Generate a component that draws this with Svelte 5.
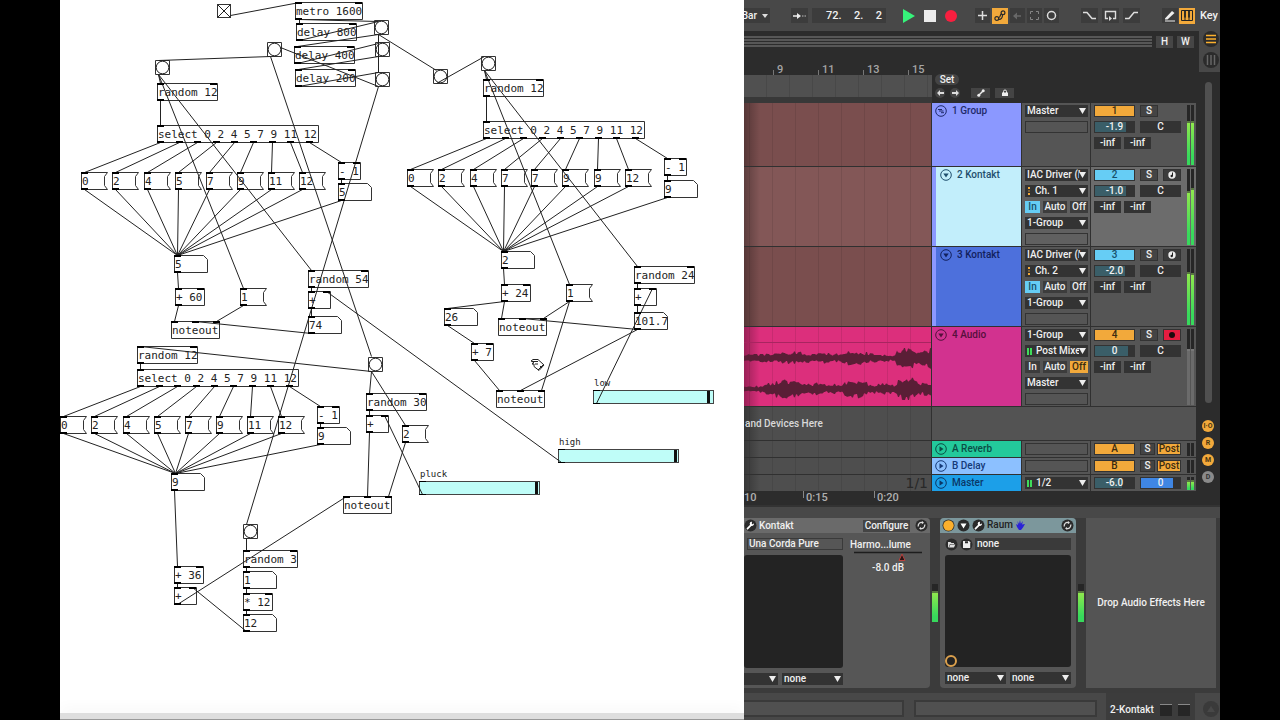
<script>
  const mono = (kind, x, y, w, t, ins, outs, h = 17) => ({ kind, x, y, w, t, ins, outs, h });
  const L = [3];
  const spread = (w) => [3, w - 4];
  const obj = (x, y, w, t, ins = spread(w), outs = L) => mono('obj', x, y, w, t, ins, outs);
  const msg = (x, y, t) => mono('msg', x, y, 26, t, L, L);
  const num = (x, y, t) => mono('num', x, y, 33, t, L, L);
  const bang = (x, y) => mono('bang', x, y, 14, '', L, L, 14);
  const nine = [3, 22, 40, 59, 77, 96, 115, 133, 152];
  const sel = (x, y) => obj(x, y, 161, 'select 0 2 4 5 7 9 11 12', L, nine);
  const nout = (x, y) => obj(x, y, 48, 'noteout', [3, 24, 45], []);

  const fans = [
    { xs: [21, 52, 84, 115, 146, 177, 208, 239], y: 173, t: ['0', '2', '4', '5', '7', '9', '11', '12'], sx: 97, sy: 126, to: [117, 256], m: [278, 163], n: [278, 184, '5'] },
    { xs: [347, 378, 410, 441, 471, 502, 534, 565], y: 170, t: ['0', '2', '4', '7', '7', '9', '9', '12'], sx: 423, sy: 122, to: [443, 252], m: [604, 159], n: [604, 181, '9'] },
    { xs: [0, 31, 63, 94, 125, 156, 187, 218], y: 417, t: ['0', '2', '4', '5', '7', '9', '11', '12'], sx: 77, sy: 370, to: [115, 474], m: [257, 407], n: [257, 428, '9'] }
  ];

  const nodes = [
    obj(235, 3, 67, 'metro 1600'), obj(236, 24, 60, 'delay 800'), obj(234, 47, 60, 'delay 400'), obj(235, 70, 60, 'delay 200'),
    bang(314, 21), bang(315, 43), bang(315, 73), bang(207, 43), bang(95, 61), bang(373, 70), bang(421, 57), bang(308, 358), bang(183, 525),
    obj(97, 84, 60, 'random 12'), obj(423, 80, 60, 'random 12'), obj(77, 347, 60, 'random 12'),
    num(114, 256, '5'), obj(115, 289, 29, '+ 60'), msg(180, 289, '1'), nout(111, 322),
    obj(248, 271, 60, 'random 54'), obj(248, 292, 22, '+'), num(248, 317, '74'),
    obj(306, 394, 60, 'random 30'), obj(306, 416, 22, '+'), msg(342, 426, '2'), nout(283, 497),
    num(441, 252, '2'), obj(441, 285, 29, '+ 24'), msg(506, 285, '1'), num(384, 309, '26'), nout(438, 319),
    obj(411, 344, 22, '+ 7'), nout(436, 391), obj(574, 267, 60, 'random 24'), obj(574, 289, 22, '+'), num(574, 313, '101.7'),
    num(111, 474, '9'), obj(183, 551, 54, 'random 3'), num(183, 572, '1'), obj(183, 594, 29, '* 12'), num(183, 615, '12'),
    obj(114, 567, 29, '+ 36'), obj(114, 588, 22, '+'),
    ...fans.flatMap((f) => [
      sel(f.sx, f.sy), obj(f.m[0], f.m[1], 22, '- 1'), num(f.n[0], f.n[1], f.n[2]),
      ...f.xs.map((x, i) => msg(x, f.y, f.t[i]))
    ])
  ];

  const wires = [
    [170, 16, 239, 3], [239, 20, 239, 24], [239, 20, 318, 22], [239, 41, 318, 22], [318, 35, 237, 47], [237, 64, 318, 44],
    [318, 57, 238, 70], [238, 87, 318, 73], [318, 35, 318, 73], [318, 35, 376, 71], [318, 87, 220, 48], [318, 87, 186, 525],
    [210, 57, 311, 357], [210, 57, 98, 61], [98, 75, 100, 84], [98, 75, 183, 289], [98, 75, 251, 271], [100, 101, 100, 126],
    [117, 273, 118, 289], [118, 306, 114, 322], [183, 306, 156, 322], [251, 334, 135, 322], [251, 288, 251, 292], [251, 309, 251, 317],
    [501, 463, 266, 292], [311, 372, 80, 347], [311, 372, 309, 394], [311, 372, 345, 426], [309, 411, 309, 416], [309, 433, 307, 497],
    [362, 495, 324, 416], [345, 443, 328, 497], [80, 364, 80, 370], [117, 605, 286, 497], [186, 632, 132, 588], [114, 491, 117, 567],
    [117, 584, 117, 588], [186, 539, 186, 551], [186, 568, 186, 572], [186, 589, 186, 594], [186, 611, 186, 615],
    [376, 84, 424, 57], [424, 71, 426, 80], [424, 71, 509, 285], [424, 71, 577, 267], [426, 97, 426, 122],
    [577, 284, 577, 289], [577, 306, 577, 313], [536, 404, 592, 289], [577, 330, 462, 319], [577, 330, 460, 391],
    [509, 302, 483, 319], [509, 302, 481, 391], [444, 302, 441, 319], [444, 302, 387, 309], [387, 326, 414, 344], [414, 361, 439, 391],
    [443, 269, 444, 285],
    ...fans.flatMap((f) => [
      ...f.xs.map((x, i) => [f.sx + nine[i], f.sy + 17, x + 3, f.y]),
      ...f.xs.map((x) => [x + 3, f.y + 17, f.to[0], f.to[1]]),
      [f.sx + 152, f.sy + 17, f.m[0] + 3, f.m[1]],
      [f.m[0] + 3, f.m[1] + 17, f.n[0] + 3, f.n[1]],
      [f.n[0] + 3, f.n[1] + 17, f.to[0], f.to[1]]
    ])
  ];

  const sliders = [
    { id: 'low', x: 533, y: 377, v: 97 },
    { id: 'high', x: 498, y: 436, v: 99 },
    { id: 'pluck', x: 359, y: 468, v: 99 }
  ];

  function frame(n) {
    const { x, y, w, h } = n;
    if (n.kind === 'msg') return `M${x + w} ${y}H${x}V${y + h}H${x + w}L${x + w - 3} ${y + h - 4}V${y + 4}Z`;
    if (n.kind === 'num') return `M${x} ${y}H${x + w - 4}L${x + w} ${y + 4}V${y + h}H${x}Z`;
    return `M${x} ${y}H${x + w}V${y + h}H${x}Z`;
  }

  function wave(mid, env) {
    let top = '', bottom = '';
    for (let x = 0; x <= 187; x++) {
      let k = 0;
      while (k < env.length - 2 && env[k + 1][0] <= x) k++;
      const [x0, a0] = env[k], [x1, a1] = env[k + 1];
      const a = a0 + ((a1 - a0) * (x - x0)) / (x1 - x0);
      const r = Math.abs(Math.sin((x >> 1) * 12.9898 + mid) * 43758.5) % 1;
      const q = Math.abs(Math.sin((x >> 1) * 7.233 + mid) * 24634.6) % 1;
      top += `L${x} ${(mid - a * (0.5 + 0.6 * r)).toFixed(1)}`;
      bottom = `L${x} ${(mid + a * (0.5 + 0.6 * q)).toFixed(1)}` + bottom;
    }
    return 'M' + top.slice(1) + bottom + 'Z';
  }
  const waveA = wave(31, [[0, 4], [30, 4], [45, 6], [58, 6], [66, 4], [80, 5], [92, 4], [104, 7], [118, 6], [135, 4], [151, 3], [153, 9], [168, 10], [176, 6], [187, 10]]);
  const waveB = wave(62, [[0, 3], [14, 3], [22, 6], [34, 8], [50, 10], [58, 5], [74, 6], [84, 4], [92, 5], [98, 3], [103, 9], [118, 9], [128, 4], [142, 6], [150, 4], [154, 10], [168, 11], [178, 6], [187, 7]]);

  const tracks = [
    { n: '1', name: '1 Group', c: 'group', icon: 'fold', act: 'amber', vol: '-1.9', volw: 80, ios: [['Master'], null], m: [74, 74] },
    { n: '2', name: '2 Kontakt', c: 'sky', icon: 'down', act: 'cyan', vol: '-1.0', volw: 80, arm: 'note', m: [71, 75], sel: true, child: true,
      ios: [['IAC Driver (I'], ['Ch. 1', 'midi'], 'In', ['1-Group'], null] },
    { n: '3', name: '3 Kontakt', c: 'blue', icon: 'down', act: 'cyan', vol: '-2.0', volw: 78, arm: 'note', m: [70, 68], child: true,
      ios: [['IAC Driver (I'], ['Ch. 2', 'midi'], 'In', ['1-Group'], null] },
    { n: '4', name: '4 Audio', c: 'pink', icon: 'down', act: 'amber', vol: '0', volw: 84, arm: 'rec', m: [74, 74], quiet: true,
      ios: [['1-Group'], ['Post Mixer', 'audio'], 'Off', ['Master'], null] }
  ];
  const returns = [{ n: 'A', name: 'A Reverb', c: 'mint' }, { n: 'B', name: 'B Delay', c: 'pale' }];
</script>

{#snippet pick(text, kind, label)}
  <span class="pick">
    {#if kind === 'midi'}<svg width="5" height="8" viewBox="0 0 5 8"><path d="M1 0h2v2h-2zM1 6h2v2h-2z" fill="#f2a93b" /><path d="M1 3h2v2h-2z" fill="#7a5f33" /></svg>{/if}
    {#if kind === 'audio'}<svg width="6" height="8" viewBox="0 0 6 8"><path d="M0 1h2v7H0zM3 1h2v7H3z" fill="#3fdc5a" /></svg>{/if}
    <select aria-label={label}><option>{text}</option></select>
    <svg class="tri" width="7" height="6" viewBox="0 0 7 6"><path d="M0 0h7L3.500 6z" fill="#eee" /></svg>
  </span>
{/snippet}

{#snippet disc(icon)}
  <svg class="disc" width="12" height="12" viewBox="0 0 12 12" fill="none" stroke="currentColor">
    <circle cx="6" cy="6" r="5.300" />
    {#if icon === 'fold'}<path d="M3 4.500h4M4 6h4.500M6 7.700h3" />
    {:else if icon === 'down'}<path d="M3.300 4.500h5.400L6 8.500z" fill="currentColor" stroke="none" />
    {:else}<path d="M4.500 3.300v5.400L8.500 6z" fill="currentColor" stroke="none" />{/if}
  </svg>
{/snippet}

{#snippet meter(a, b, quiet)}
  <span class="meter" class:quiet><i><b style:height="{a}%"></b></i><i><b style:height="{b}%"></b></i></span>
{/snippet}

{#snippet small(kind)}
  <svg width="13" height="13" viewBox="0 0 13 13" fill="none">
    <circle cx="6.500" cy="6.500" r="6" fill="#2b2b2b" />
    {#if kind === 'on'}<circle cx="6.500" cy="6.500" r="5.200" fill="#fbb02d" />
    {:else if kind === 'open'}<path d="M3.500 4.500h6L6.500 9.500z" fill="#fff" />
    {:else if kind === 'wrench'}<path d="M3.500 9.700L7.500 5.700" stroke="#fff" stroke-width="1.800" stroke-linecap="round" /><path d="M9.800 4.300a2.100 2.100 0 1 1-1.700-1.500L7.700 4.500l.9.900z" fill="#fff" />
    {:else if kind === 'swap'}<path d="M3.300 7.500a3.300 3.300 0 0 1 4-4M9.700 5.500a3.300 3.300 0 0 1-4 4" stroke="#ddd" stroke-width="1.300" /><path d="M7 2l2 1.800L6.800 5.200zM6 8l-2 1.300 2.200 1.700z" fill="#ddd" />
    {:else if kind === 'folder'}<path d="M3 4h2.500l1 1H9v1H5L3.500 9.500H3zM5.300 6.500h5L9 9.500H4z" fill="#ddd" />
    {:else if kind === 'disk'}<path d="M3 3h6l1.200 1.200V10H3z" fill="#eee" /><path d="M5 3.300h3v2H5z" fill="#2b2b2b" />{/if}
  </svg>
{/snippet}

<div class="screen">
  <section class="patch" aria-label="Patch">
    <input class="toggle" type="checkbox" checked aria-label="Start metro" />
    {#each nodes as n}
      {#if n.kind === 'msg'}
        <button class="node" style="left:{n.x}px;top:{n.y}px;width:{n.w}px">{n.t}</button>
      {:else if n.kind === 'num'}
        <input class="node" style="left:{n.x}px;top:{n.y}px;width:{n.w + 3}px" value={n.t} aria-label="Number" />
      {:else if n.kind === 'bang'}
        <button class="node bang" style="left:{n.x}px;top:{n.y}px" aria-label="Bang"></button>
      {:else}
        <div class="node" style="left:{n.x}px;top:{n.y}px;width:{n.w}px">{n.t}</div>
      {/if}
    {/each}
    {#each sliders as s}
      <div class="fader" style="left:{s.x}px;top:{s.y}px">
        <label for={s.id}>{s.id}</label>
        <input id={s.id} type="range" min="0" max="100" value={s.v} />
      </div>
    {/each}
    <svg class="wires" aria-hidden="true">
      <g fill="none" stroke="#222" transform="translate(.5 -.5)">
        {#each nodes as n}
          <path d={frame(n)} stroke="#333" />
          {#if n.kind === 'bang'}<circle cx={n.x + 7} cy={n.y + 7} r="6.300" />{/if}
        {/each}
        {#each wires as w}<path d="M{w[0]} {w[1]}L{w[2]} {w[3]}" />{/each}
      </g>
      {#each nodes as n}
        {#if n.kind !== 'bang'}
          {#each n.ins as i}<rect x={n.x + i - 3} y={n.y - 1} width="7" height="2" />{/each}
          {#each n.outs as o}<rect x={n.x + o - 3} y={n.y + n.h - 2} width="7" height="2" />{/each}
        {/if}
      {/each}
      {#each sliders as s}
        <rect x={s.x} y={s.y + 13} width="7" height="1" /><rect x={s.x} y={s.y + 26} width="7" height="1" />
      {/each}
      <path d="M471 361l2-1.500h5l6 5.500-5 5.500-5-4v-2.500h-2l2-1.500z" fill="#fff" stroke="#222" />
      <path d="M472 361.500h6M475 364h3M478 370l5-5M480 366l2 2" fill="none" stroke="#222" />
    </svg>
    <div class="dock"></div>
  </section>

  <section class="daw" aria-label="Arrangement">
    <header class="bar">
      <button class="cut tb">Bar <svg width="8" height="4" viewBox="0 0 8 4"><path d="M1 0h6L4 4z" fill="#ddd" /></svg></button>
      <div class="grp pos">
        <button class="tb w17" aria-label="Follow"><svg width="15" height="8" viewBox="0 0 15 8"><path d="M1 4h5" stroke="#eee" stroke-width="1.500" /><path d="M5 1l4 3-4 3z" fill="#eee" /><path d="M10 4h1.500M12.500 4h1.500" stroke="#bbb" /></svg></button>
        <div class="tb clock"><span>72.</span><span>2.</span><span>2</span></div>
      </div>
      <div class="grp play">
        <button aria-label="Play"><svg width="14" height="14" viewBox="0 0 14 14"><path d="M1 0l12 7-12 7z" fill="#36f27a" /></svg></button>
        <button aria-label="Stop"><svg width="12" height="12"><rect width="12" height="12" fill="#ececec" /></svg></button>
        <button aria-label="Record"><svg width="12" height="12"><circle cx="6" cy="6" r="6" fill="#f81f3f" /></svg></button>
      </div>
      <div class="grp edit">
        <button class="tb" aria-label="Overdub"><svg width="11" height="11"><path d="M5.500 1v9M1 5.500h9" stroke="#ddd" stroke-width="1.500" /></svg></button>
        <button class="tb hot" aria-label="Automation arm"><svg width="12" height="12" viewBox="0 0 12 12" fill="none" stroke="#2a2a2a" stroke-width="1.200"><circle cx="2.800" cy="8.500" r="1.900" /><circle cx="9" cy="2.800" r="1.900" /><path d="M4.500 7.500C7 7.500 5.500 4.500 7.500 4.200M8.500 5C8.500 8 7 9.500 4.800 9.300" /></svg></button>
        <button class="tb" aria-label="Re-enable automation"><svg width="10" height="8" viewBox="0 0 10 8"><path d="M0 4l4-3.500v7zM4 3.300h4v1.400H4z" fill="#686868" /></svg></button>
        <button class="tb" aria-label="Capture"><svg width="11" height="11" fill="none" stroke="#858585"><path d="M1.500 4V1.500H4M7 1.500h2.500V4M9.500 7v2.500H7M4 9.500H1.500V7" /></svg></button>
        <button class="tb" aria-label="Session record"><svg width="11" height="11"><circle cx="5.500" cy="5.500" r="4" fill="none" stroke="#ddd" stroke-width="1.500" /></svg></button>
      </div>
      <div class="grp loop">
        <button class="tb" aria-label="Punch in"><svg width="13" height="9" fill="none" stroke="#ddd" stroke-width="1.500"><path d="M0 1.500h4l5 6h4" /></svg></button>
        <button class="tb" aria-label="Loop"><svg width="13" height="12" fill="none" stroke="#ddd" stroke-width="1.400"><path d="M4 8.500H1.500v-7h10v7H9" /><path d="M5 6l3 2.500L5 11z" fill="#ddd" stroke="none" /></svg></button>
        <button class="tb" aria-label="Punch out"><svg width="13" height="9" fill="none" stroke="#ddd" stroke-width="1.500"><path d="M0 7.500h4l5-6h4" /></svg></button>
      </div>
      <div class="grp keys">
        <button class="tb" aria-label="Draw"><svg width="12" height="12" viewBox="0 0 12 12"><path d="M1 8.500L8 1l2.500 2L3.500 9.500H1z" fill="#eee" /><path d="M1 11h10" stroke="#eee" /></svg></button>
        <button class="tb hot" aria-label="Computer keyboard"><svg width="12" height="11" fill="none" stroke="#222"><path d="M.5.5h11v10H.5zM4 7v3.500M8 7v3.500" /><path d="M4 1v6.500M8 1v6.500" stroke-width="1.800" /></svg></button>
        <button class="key">Key</button>
      </div>
    </header>

    <div class="main">
      <div class="body">
        <div class="overview"><div class="stripes"></div><button>H</button><button>W</button></div>
        <div class="rulers">
          <div>
            <div class="beats">{#each ['9', '11', '13', '15'] as b}<span>{b}</span>{/each}</div>
            <div class="scrub"></div>
          </div>
          <div class="locators">
            <button class="set">Set</button>
            <div class="mini">
              <button class="round" aria-label="Previous locator"><svg width="7" height="6"><path d="M0 3l3-3v2h4v2H3v2z" fill="#ddd" /></svg></button>
              <button class="round" aria-label="Next locator"><svg width="7" height="6"><path d="M7 3L4 0v2H0v2h4v2z" fill="#ddd" /></svg></button>
              <button class="flat" aria-label="Automation mode"><svg width="8" height="8"><path d="M1.500 6.500l5-5" stroke="#eee" stroke-width="1.500" /><circle cx="1.800" cy="6.200" r="1.500" fill="#eee" /><circle cx="6.200" cy="1.800" r="1.500" fill="#eee" /></svg></button>
              <button class="flat" aria-label="Lock envelopes"><svg width="8" height="8"><path d="M1 3.500h6V7H1z" fill="#eee" /><path d="M2.500 4V2.500a1.500 1.500 0 0 1 3 0V4" fill="none" stroke="#eee" /></svg></button>
            </div>
          </div>
        </div>

        <div class="tracks">
          {#each tracks as t}
            <div class="lane {t.n === '4' ? 'audio' : 'clip'}" class:lit={t.sel}>
              {#if t.n === '4'}
                <svg viewBox="0 0 187 79" preserveAspectRatio="none"><path d="M0 15.500h187" stroke="#a82560" /><path d={waveA} fill="#5a1e36" /><path d={waveB} fill="#5a1e36" /></svg>
              {/if}
            </div>
            <div class="head {t.c}" class:child={t.child}>{@render disc(t.icon)}<span>{t.name}</span></div>
            <div class="io" class:lit={t.sel}>
              {#each t.ios as io}
                {#if io === null}<div class="blank"></div>
                {:else if typeof io === 'string'}
                  <div class="monitor">{#each ['In', 'Auto', 'Off'] as m}<button class={m === io ? (m === 'In' ? 'cyan' : 'amber') : ''}>{m}</button>{/each}</div>
                {:else}{@render pick(io[0], io[1], t.name + ' routing')}{/if}
              {/each}
            </div>
            <div class="mix" class:lit={t.sel}>
              <div class="controls">
                <button class={t.act}>{t.n}</button>
                <div class="pair"><button class="solo">S</button>
                  {#if t.arm === 'note'}<button class="arm" aria-label="Arm"><svg width="8" height="8"><circle cx="4" cy="4" r="3.700" fill="#eee" /><path d="M4.500 1.500v3.500" stroke="#222" /><circle cx="3.700" cy="5" r="1.200" fill="#222" /></svg></button>
                  {:else if t.arm === 'rec'}<button class="arm red" aria-label="Arm"><svg width="8" height="8"><circle cx="4" cy="4" r="3" fill="#1d0a0d" /></svg></button>{/if}
                </div>
                <div class="vol"><i style:width="{t.volw}%"></i><span>{t.vol}</span></div>
                <div class="cell">C</div>
                <div class="peaks"><span>-inf</span><span>-inf</span></div>
              </div>
              {@render meter(t.m[0], t.m[1], t.quiet)}
            </div>
          {/each}

          <div class="lane gray here">and Devices Here</div>
          <div class="void"></div>

          {#each returns as r}
            <div class="lane gray"></div>
            <div class="head slim {r.c}">{@render disc('right')}<span>{r.name}</span></div>
            <div class="io"><div class="blank"></div></div>
            <div class="mix">
              <div class="controls"><button class="amber">{r.n}</button><div class="pair"><button class="solo">S</button><button class="amber post">Post</button></div></div>
              {@render meter(0, 0, false)}
            </div>
          {/each}
          <div class="lane gray frac">1/1</div>
          <div class="head slim azure">{@render disc('right')}<span>Master</span></div>
          <div class="io">{@render pick('1/2', 'audio', 'Master output')}</div>
          <div class="mix">
            <div class="controls"><div class="vol"><i style="width:70%"></i><span>-6.0</span></div><div class="vol cue"><i style="width:83%"></i><span>0</span></div></div>
            {@render meter(75, 75, false)}
          </div>
        </div>
        <div class="time"><span class="first">10</span><span>0:15</span><span>0:20</span></div>
      </div>

      <div class="rail">
        <div class="views">
          <button aria-label="Arrangement view"><svg width="16" height="16"><circle cx="8" cy="8" r="8" fill="#2b2b2b" /><path d="M3 4.500h10M3 8h10M3 11.500h10" stroke="#fbb02d" stroke-width="1.500" /></svg></button>
          <button aria-label="Session view"><svg width="16" height="16"><circle cx="8" cy="8" r="8" fill="#2b2b2b" /><path d="M4.500 3v10M8 3v10M11.500 3v10" stroke="#666" stroke-width="1.500" /></svg></button>
        </div>
        <div class="scroll"></div>
        <div class="chips"><button>I·O</button><button>R</button><button>M</button><button class="off">D</button></div>
      </div>
    </div>

    <div class="devices">
      <article class="device kontakt">
        <header>{@render small('wrench')}<span class="grow">Kontakt</span><button class="conf">Configure</button>{@render small('swap')}</header>
        <div class="two">
          <div class="left">
            <div class="preset"><span>Una Corda Pure</span></div>
            <div class="pad"></div>
            <div class="axes">{@render pick('', '', 'X axis')}{@render pick('none', '', 'Y axis')}</div>
          </div>
          <div class="param">
            <span>Harmo...lume</span>
            <svg width="68" height="11"><path d="M0 1.500h68" stroke="#1d1d1d" stroke-width="1.500" /><path d="M48 3l3 6.500h-6z" fill="#2a1515" stroke="#b8433f" /></svg>
            <span class="mid">-8.0 dB</span>
          </div>
        </div>
      </article>
      <div class="level">{@render meter(82, 82, false)}</div>
      <article class="device raum">
        <header>{@render small('on')}{@render small('open')}{@render small('wrench')}<span>Raum</span><svg class="grow" width="10" height="10" viewBox="0 0 10 10" preserveAspectRatio="xMinYMid"><path d="M1 4l2 1-.5-4 1.500 3L5 0l.8 3.800L8 1 7 4.500 10 4 8 7.500 6 10H4L2 7z" fill="#2a22d8" /></svg>{@render small('swap')}</header>
        <div class="row">{@render small('folder')}{@render small('disk')}<input value="none" aria-label="Preset" /></div>
        <div class="pad"><i></i></div>
        <div class="axes">{@render pick('none', '', 'X axis')}{@render pick('none', '', 'Y axis')}</div>
      </article>
      <div class="level">{@render meter(82, 82, false)}</div>
      <div class="drop">Drop Audio Effects Here</div>
    </div>

    <footer>
      <div class="slot first"></div><div class="slot second"></div>
      <div class="chosen">2-Kontakt <i></i><i></i></div>
      <svg width="18" height="18"><circle cx="9" cy="9" r="8" fill="#3a3a3a" /><path d="M5 12l4-6 4 6z" fill="#484848" /></svg>
    </footer>
  </section>
</div>

<style>
  :global(body) { background: #000; overflow: hidden; }
  .screen { display: grid; grid-template-columns: minmax(0, 1fr) 476px; min-height: 100vh; padding: 0 60px; background: #000; }
  button, input, select { font: inherit; color: inherit; margin: 0; padding: 0; border: 0; background: none; border-radius: 0; }
  button { display: flex; align-items: center; justify-content: center; }

  .patch { position: relative; background: #fff; overflow: hidden; color: #222; font: 11px/17px "DejaVu Sans Mono", monospace; }
  .node { position: absolute; box-sizing: border-box; height: 17px; padding: 0 0 0 1px; white-space: nowrap; text-align: left; justify-content: flex-start; line-height: 17px; }
  .bang { width: 15px; height: 15px; padding: 0; }
  .toggle { position: absolute; left: 157px; top: 4px; width: 14px; height: 14px; appearance: none; border: 1px solid #333;
    background: linear-gradient(45deg, transparent 46%, #222 46%, #222 54%, transparent 54%), linear-gradient(-45deg, transparent 46%, #222 46%, #222 54%, transparent 54%); }
  .wires { position: absolute; inset: 0; width: 100%; height: 100%; pointer-events: none; }
  .fader { position: absolute; display: flex; flex-direction: column; width: 121px; font-size: 9px; }
  .fader label { height: 13px; line-height: 13px; padding-left: 1px; }
  .fader input { appearance: none; box-sizing: border-box; width: 100%; height: 14px; border: 1px solid #444; background: #bffdf8; }
  .fader input::-webkit-slider-thumb { appearance: none; width: 3px; height: 12px; background: #111; }
  .dock { position: absolute; left: 0; right: 0; bottom: 0; height: 7px; background: #dedede; border-bottom: 1px solid #999; box-sizing: border-box; box-shadow: 0 -4px 14px #0000000c; }

  .daw { display: flex; flex-direction: column; min-width: 0; overflow: hidden; background: #484848; color: #f0f0f0; font: 500 10px/12px Roboto, sans-serif; }
  .bar { display: flex; align-items: center; height: 31px; box-sizing: border-box; padding-right: 2px; }
  .grp { display: flex; align-items: center; }
  .tb { height: 15px; background: #3c3c3c; }
  .cut { width: 26px; justify-content: flex-end; gap: 4px; white-space: nowrap; padding-right: 1px; box-sizing: border-box; }
  .cut svg { flex: none; }
  .pos { margin-left: 21px; gap: 4px; }
  .w17 { width: 17px; }
  .clock { display: flex; width: 74px; box-sizing: border-box; padding: 0 4px 0 14px; justify-content: space-between; line-height: 15px; font-size: 11px; }
  .play { margin-left: 14px; gap: 3px; }
  .play button { width: 18px; height: 18px; }
  .edit { margin-left: 15px; gap: 2px; }
  .edit .tb { width: 15px; }
  .loop { margin-left: 22px; gap: 4px; }
  .loop .tb { width: 17px; }
  .keys { margin-left: auto; gap: 1px; }
  .keys .tb { width: 16px; }
  .key { margin-left: 4px; font-size: 11px; }
  .tb.hot { background: #f2a93b; width: 16px; height: 16px; }

  .main { display: grid; grid-template-columns: minmax(0, 1fr) 24px; background: #2c2c2c; border-bottom: 2px solid #333; }
  .overview { display: flex; gap: 4px; height: 31px; align-items: flex-start; padding: 5px 2px 0 0; box-sizing: border-box; }
  .stripes { flex: 1; height: 11px; background: repeating-linear-gradient(#575757 0 2px, #2c2c2c 2px 3px); }
  .overview button { width: 17px; height: 12px; background: #464646; }
  .rulers { display: grid; grid-template-columns: minmax(0, 1fr) 264px; height: 41px; }
  .beats { display: flex; height: 13px; padding-left: 29px; color: #a5a5a5; overflow: hidden; font-size: 11px; }
  .beats span { flex: 0 0 41px; padding-left: 4px; line-height: 15px; background: linear-gradient(#777, #777) 0 100% / 1px 5px no-repeat; }
  .scrub { height: 22px; background: repeating-linear-gradient(90deg, #505050 0 22px, #484848 22px 23px); border-bottom: 6px solid #383838; }
  .locators { padding: 12px 0 0 3px; display: flex; flex-direction: column; gap: 3px; align-items: flex-start; }
  .set { width: 24px; height: 11px; border-radius: 6px; background: #444; }
  .mini { display: flex; gap: 5px; }
  .mini button { height: 10px; background: #444; }
  .round { width: 10px; border-radius: 5px; }
  .flat { width: 19px; }
  .mini .flat:nth-child(3) { margin-left: 6px; }

  .tracks { display: grid; grid-template-columns: minmax(0, 1fr) 89px 68px 105px; grid-template-rows: 63px 79px 79px 79px 33px 16px 16px 16px; gap: 1px; background: #303030; }
  .lane { overflow: hidden; color: #d8d8d8; background: linear-gradient(90deg, #0000004d, transparent 16px), repeating-linear-gradient(90deg, transparent 6px 28px, #00000018 28px 29px), var(--c); --c: #7a4e4e; }
  .lane.lit { --c: #835757; }
  .lane.audio { --c: #dc2f7c; }
  .lane.gray { --c: #4e4e4e; }
  .lane svg { display: block; width: 100%; height: 100%; }
  .here { line-height: 33px; padding-left: 1px; }
  .lane.frac { overflow: visible; text-align: right; padding-right: 3px; font: 14px/16px "DejaVu Sans", sans-serif; color: #282828; }
  .head { display: flex; align-items: flex-start; gap: 5px; padding: 2px 0 0 3px; box-sizing: border-box; white-space: nowrap; color: #1f2a6a; }
  .head span { line-height: 12px; }
  .disc { flex: none; }
  .head.child { border-left: 4px solid #8b98ff; padding-left: 4px; }
  .group { background: #8b98ff; }
  .sky { background: #c2eefb; color: #1f4f6e; }
  .blue { background: #4d70dc; color: #12215e; }
  .pink { background: #d2328f; color: #55103c; }
  .mint { background: #23c99b; color: #0b4d45; }
  .pale { background: #8cc0ff; color: #153a78; }
  .azure { background: #1c9fe8; color: #0b3766; }
  .io, .mix { background: #555; box-sizing: border-box; min-width: 0; }
  .mix.lit { background: #6c6c6c; }
  .io.lit { background: #606060; }
  .io { display: flex; flex-direction: column; gap: 4px; padding: 2px 2px 0 3px; }
  .pick { position: relative; display: flex; align-items: center; gap: 3px; height: 12px; min-width: 0; background: #333; padding: 0 2px; box-sizing: border-box; overflow: hidden; flex: none; }
  .pick select { appearance: none; flex: 1; min-width: 0; height: 12px; line-height: 12px; overflow: hidden; text-overflow: clip; }
  .pick .tri { position: absolute; right: 2px; top: 3px; background: #333; }
  .blank { height: 12px; box-sizing: border-box; border: 1px solid #333; flex: none; }
  .monitor { display: grid; grid-template-columns: 15px 1fr 18px; gap: 3px; height: 12px; }
  .monitor button { background: #3c3c3c; }
  button.amber, .monitor .amber { background: #f2a93b; color: #3a2b10; }
  button.cyan, .monitor .cyan { background: #66cdf5; color: #17506b; }
  .mix { display: flex; justify-content: space-between; padding: 2px 2px 1px 3px; }
  .controls { display: grid; grid-template-columns: 41px 41px; grid-auto-rows: 12px; gap: 4px 5px; align-content: start; }
  .controls > button, .pair button, .cell, .vol, .peaks span { height: 12px; box-sizing: border-box; border: 1px solid #333; text-align: center; line-height: 10px; }
  .pair { display: flex; justify-content: space-between; }
  .solo { width: 18px; background: #444; }
  .post { width: 24px; }
  .slim ~ .mix .solo { width: 15px; }
  .arm { width: 18px; background: #3c3c3c; }
  .arm.red { background: #e51c40; }
  .cell, .peaks span { background: #333; }
  .vol { position: relative; background: #333; }
  .vol i { position: absolute; inset: 0 auto 0 0; background: #3a5e68; }
  .vol.cue i { background: #3f86e4; }
  .vol span { position: relative; }
  .peaks { grid-column: 1 / 3; display: flex; gap: 3px; }
  .peaks span { width: 27px; }
  .meter { display: flex; gap: 1px; width: 7px; }
  .meter i { flex: 1; display: flex; align-items: flex-end; background: #262626; }
  .meter b { display: block; width: 100%; background: linear-gradient(#8fe84e, #37d95c 80%); border-top: 2px solid #58793f; box-sizing: border-box; }
  .meter b[style*=" 0%"] { border: 0; }
  .quiet b { background: #6b6b6b; border-color: #777; }
  .void { grid-column: 2 / 5; background: #535353; }
  .time { display: flex; height: 14px; color: #b0b0b0; width: 187px; font-size: 11px; overflow: hidden; }
  .time span { flex: 0 0 71px; box-sizing: border-box; padding-left: 2px; line-height: 14px; border-left: 1px solid transparent; border-image: linear-gradient(#888 50%, transparent 50%) 1; }
  .time .first { flex-basis: 59px; padding: 0; border: 0; }

  .rail { display: flex; flex-direction: column; align-items: center; }
  .views { align-self: stretch; height: 41px; margin-left: 3px; background: #484848; display: flex; flex-direction: column; align-items: center; gap: 5px; padding-left: 3px; }
  .scroll { width: 7px; height: 321px; margin-top: 10px; border-radius: 4px; background: #505050; }
  .chips { display: flex; flex-direction: column; gap: 5px; margin-top: 17px; }
  .chips button { width: 12px; height: 12px; border-radius: 6px; background: #f2a93b; color: #4a3510; font-size: 7px; font-weight: 700; }
  .chips .off { background: #8a8a8a; color: #333; }

  .devices { display: grid; grid-template-columns: 186px 10px 136px 10px minmax(0, 1fr); height: 185px; box-sizing: border-box; padding: 0 4px 4px 0; border-top: 11px solid #484848; background: #3b3b3b; }
  .device { background: #565656; border-radius: 4px; overflow: hidden; box-sizing: border-box; }
  .device header { display: flex; align-items: center; gap: 2px; height: 15px; background: #6a6a6a; padding: 0 2px; }
  .kontakt { border-radius: 0 4px 4px 0; }
  .kontakt header { padding-left: 0; }
  .raum header { background: #7c979c; color: #222; }
  .grow { flex: 1; }
  .conf { height: 12px; width: 47px; background: #444; margin-right: 3px; }
  .two { display: grid; grid-template-columns: 99px 1fr; gap: 10px; }
  .left { display: flex; flex-direction: column; gap: 5px; padding-top: 5px; }
  .preset { height: 12px; padding-left: 3px; }
  .preset span { display: block; height: 12px; box-sizing: border-box; border: 1px solid #3a3a3a; line-height: 10px; padding-left: 1px; }
  .pad { height: 113px; border-radius: 3px; background: #232323; display: flex; align-items: flex-end; }
  .pad i { width: 12px; height: 12px; box-sizing: border-box; border: 2px solid #dba04d; border-radius: 6px; }
  .axes { display: grid; grid-template-columns: 1fr 1fr; gap: 4px; }
  .kontakt .axes { grid-template-columns: 34px 1fr; }
  .param { display: flex; flex-direction: column; padding-top: 6px; }
  .param svg { margin-left: 1px; }
  .param span { margin-left: -3px; }
  .param .mid { text-align: center; margin: 0; padding-right: 7px; }
  .level { display: flex; justify-content: center; align-items: center; }
  .level .meter { height: 38px; width: 6px; gap: 0; }
  .raum { display: flex; flex-direction: column; gap: 5px; padding-bottom: 4px; }
  .raum .row, .raum .pad, .raum .axes { margin: 0 5px; }
  .row { display: flex; gap: 2px; height: 12px; }
  .row input { flex: 1; min-width: 0; background: #3a3a3a; padding-left: 2px; }
  .drop { display: flex; align-items: center; justify-content: center; background: #545454; }

  footer { display: flex; flex: 1; align-items: center; min-height: 28px; background: #484848; border-top: 1px solid #3b3b3b; box-sizing: border-box; }
  .slot { height: 17px; box-sizing: border-box; border: 2px solid #3a3a3a; background: #505050; margin-top: 4px; }
  .slot.first { flex: 161; border-left: 0; }
  .slot.second { flex: 183; margin-left: 10px; }
  .chosen { display: flex; align-items: center; gap: 6px; align-self: stretch; margin-left: 9px; padding: 6px 4px 0 4px; width: 89px; box-sizing: border-box; background: #3c3c3c; white-space: nowrap; }
  .chosen i { width: 12px; height: 12px; background: #262626; border-top: 1px solid #888; box-sizing: border-box; }
  footer > svg { margin: 4px 0 0 7px; }
</style>
